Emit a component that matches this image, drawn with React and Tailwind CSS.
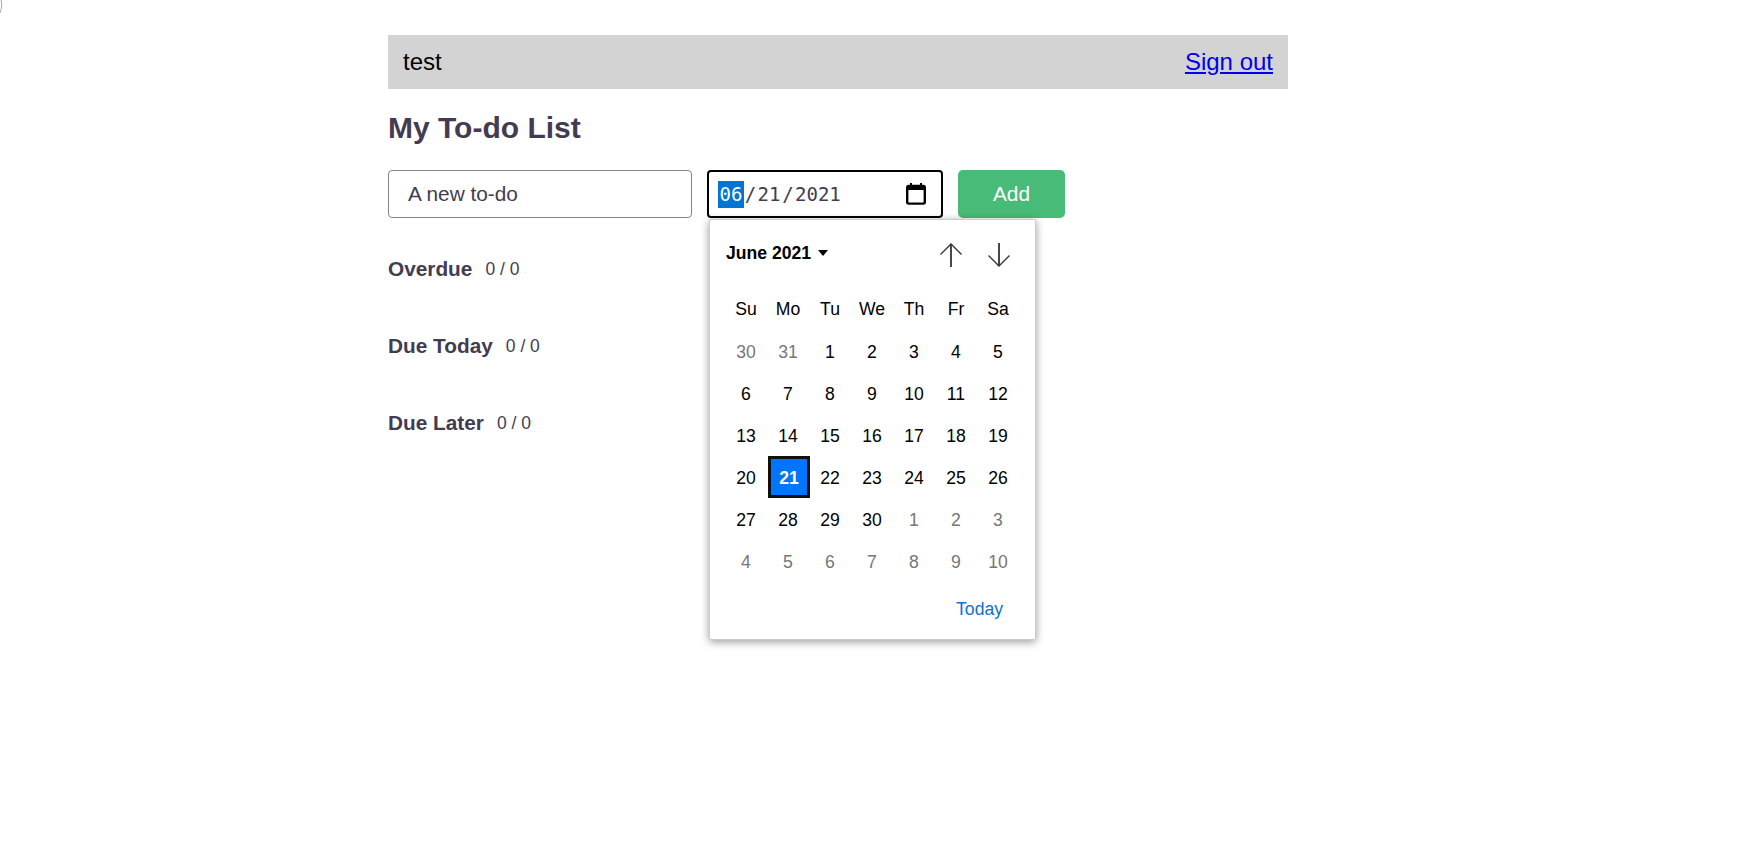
import React from 'react';

const weeks = [
  [[30, 1], [31, 1], [1], [2], [3], [4], [5]],
  [[6], [7], [8], [9], [10], [11], [12]],
  [[13], [14], [15], [16], [17], [18], [19]],
  [[20], [21, 0, 1], [22], [23], [24], [25], [26]],
  [[27], [28], [29], [30], [1, 1], [2, 1], [3, 1]],
  [[4, 1], [5, 1], [6, 1], [7, 1], [8, 1], [9, 1], [10, 1]],
];

const dayNames = ['Su', 'Mo', 'Tu', 'We', 'Th', 'Fr', 'Sa'];

const sections = [
  { name: 'Overdue', count: '0 / 0' },
  { name: 'Due Today', count: '0 / 0' },
  { name: 'Due Later', count: '0 / 0' },
];

const Arrow = ({ down }) => (
  <svg width="24" height="26" viewBox="0 0 24 26" fill="none" stroke="#333" className={down ? 'rotate-180' : ''}>
    <path d="M12 25V2" strokeWidth="1.8" />
    <path d="M1.500 12.500L12 2L22.500 12.500" strokeWidth="1.3" />
  </svg>
);

const DatePopup = () => (
  <div className="absolute left-[2px] top-[49px] z-10 flex h-[421px] w-[327px] flex-col rounded-[2px] border border-[#ccc] bg-white px-[15px] shadow-[0_2px_8px_rgba(0,0,0,0.4)] font-['Liberation_Sans',sans-serif] text-[17.6px] text-black">
    <div className="flex h-[69px] shrink-0 items-center justify-between">
      <div className="ml-[1px] flex items-center gap-[7px] pb-[3px] font-bold">
        <span>June 2021</span>
        <span className="mt-[1px] h-0 w-0 border-x-[5px] border-t-[6px] border-x-transparent border-t-black" />
      </div>
      <div className="mr-[9px] flex gap-[24px]">
        <Arrow />
        <Arrow down />
      </div>
    </div>
    <div className="grid shrink-0 grid-cols-[repeat(7,42px)] auto-rows-[42px]">
      {dayNames.map((d) => (
        <div key={d} className="flex items-center justify-center pb-[2px]">{d}</div>
      ))}
      {weeks.flat().map(([n, muted, selected], i) => (
        <div
          key={i}
          className={
            selected
              ? 'z-10 -mt-[1px] mb-[1px] ml-[1px] -mr-[1px] flex items-center justify-center border-[3px] border-[#101010] bg-[#0075ff] pt-[2px] font-bold text-white'
              : muted
              ? 'flex items-center justify-center text-[#767676]'
              : 'flex items-center justify-center'
          }
        >
          {n}
        </div>
      ))}
    </div>
    <div className="mr-[17px] mt-[13px] text-right text-[#0f70d2]">Today</div>
  </div>
);

const App = () => {
  return (
    <div className="relative h-[862px] bg-white font-['Liberation_Sans',sans-serif] text-[20.8px] text-[#433c50]">
      <svg width="4" height="16" viewBox="0 0 4 16" fill="none" stroke="#aaa" className="absolute left-0 top-0">
        <path d="M1 0C2 4 2 8 0 13" />
      </svg>
      <div className="ml-[388px] w-[900px] pt-[35px]">
        <div className="flex h-[54px] items-center justify-between bg-[#d3d3d3] px-[15px] text-[24px] text-black">
          <span>test</span>
          <a href="#" className="text-[#0000ee] underline">Sign out</a>
        </div>
        <h1 className="mt-[20px] text-[30px] font-bold leading-[38px]">My To-do List</h1>
        <div className="mt-[23px] flex h-[48px] items-stretch">
          <div className="flex w-[304px] items-center rounded-[4px] border border-[#858585] pl-[19px]">A new to-do</div>
          <div className="relative ml-[15px] w-[236px]">
            <div className="flex h-full items-center rounded-[4px] border-2 border-black pl-[9px] pr-[15px] font-['DejaVu_Sans_Mono',monospace] text-[19px]">
              <span className="flex h-[27px] w-[26px] items-center justify-center bg-[#0075d4] text-white">06</span>
              <span className="w-[13px] text-center">/</span>
              <span className="w-[24px] text-center">21</span>
              <span className="w-[14px] text-center">/</span>
              <span>2021</span>
              <svg width="20" height="22" viewBox="0 0 20 22" className="ml-auto" fill="none" stroke="#000">
                <path d="M5 0v4M15 0v4" strokeWidth="2" />
                <rect x="1.200" y="3" width="17.600" height="17.600" rx="1.500" strokeWidth="2.400" />
                <path d="M1 5.500h18" strokeWidth="3" />
              </svg>
            </div>
            <DatePopup />
          </div>
          <button className="ml-[15px] w-[107px] rounded-[5px] bg-[#48bb78] text-white">Add</button>
        </div>
        <div className="mt-[39px] flex flex-col gap-[52px]">
          {sections.map((s) => (
            <div key={s.name} className="flex h-[25px] items-center">
              <span className="mb-[2px] font-bold">{s.name}</span>
              <span className="ml-[13px] text-[17.5px]">{s.count}</span>
            </div>
          ))}
        </div>
      </div>
    </div>
  );
};

export default App;
